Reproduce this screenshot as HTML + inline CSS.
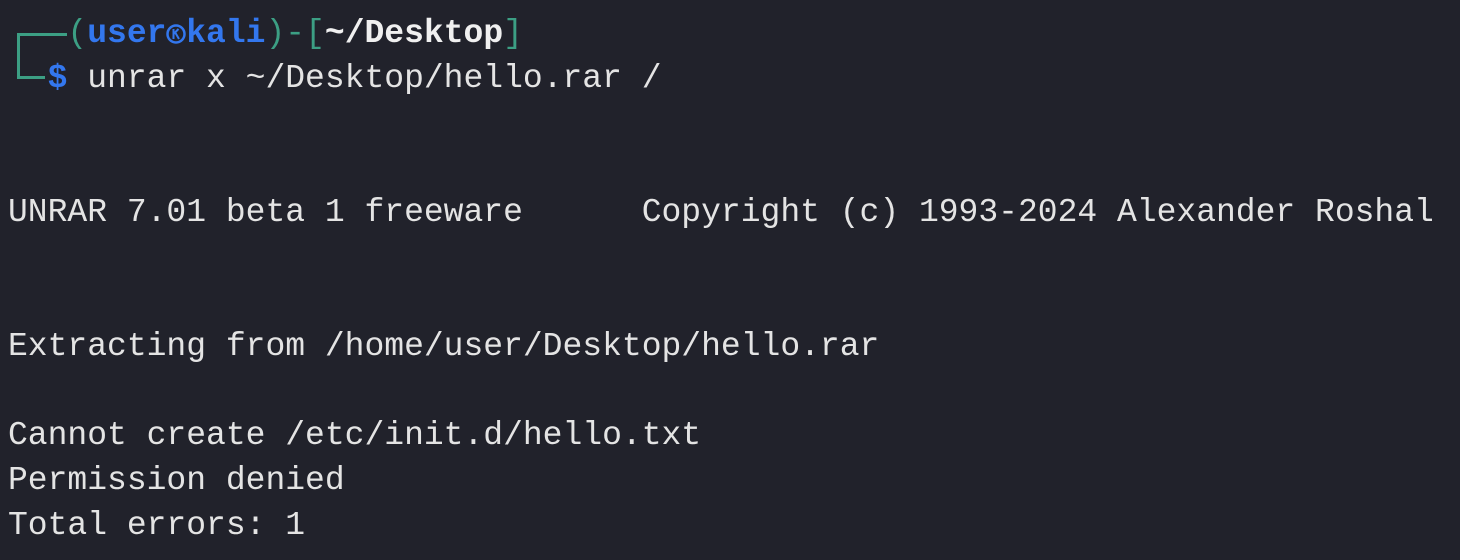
<!DOCTYPE html>
<html><head><meta charset="utf-8"><style>
html,body{margin:0;padding:0;background:#21222b;width:1460px;height:560px;overflow:hidden}
.t{position:absolute;left:8px;top:12px;font-family:"Liberation Mono",monospace;font-size:33px;line-height:44.7px;color:#e4e4e4;white-space:pre}
.g{color:#3c9f84}.b{color:#3377ee;font-weight:bold}.w{color:#f0f0f0;font-weight:bold}
.c{display:inline-block;width:19.8px;height:26px;vertical-align:-4px}
.box{position:absolute;background:#3c9f84}
</style></head><body>
<div class="box" style="left:17px;top:33px;width:3px;height:45px"></div>
<div class="box" style="left:17px;top:33px;width:50px;height:3px"></div>
<div class="box" style="left:17px;top:76px;width:28px;height:3px"></div>
<div class="t">   <span class="g">(</span><span class="b">user</span><span class="c"><svg width="20" height="26" viewBox="0 0 20 26"><circle cx="10" cy="14" r="8.5" fill="none" stroke="#3377ee" stroke-width="2.5"/><path d="M7.5 9v10M7.5 14l5-5M9.5 13l3.5 6" stroke="#3377ee" stroke-width="2" fill="none"/></svg></span><span class="b">kali</span><span class="g">)-[</span><span class="w">~/Desktop</span><span class="g">]</span>
  <span class="b">$</span> unrar x ~/Desktop/hello.rar /


UNRAR 7.01 beta 1 freeware      Copyright (c) 1993-2024 Alexander Roshal


Extracting from /home/user/Desktop/hello.rar

Cannot create /etc/init.d/hello.txt
Permission denied
Total errors: 1</div>
</body></html>
